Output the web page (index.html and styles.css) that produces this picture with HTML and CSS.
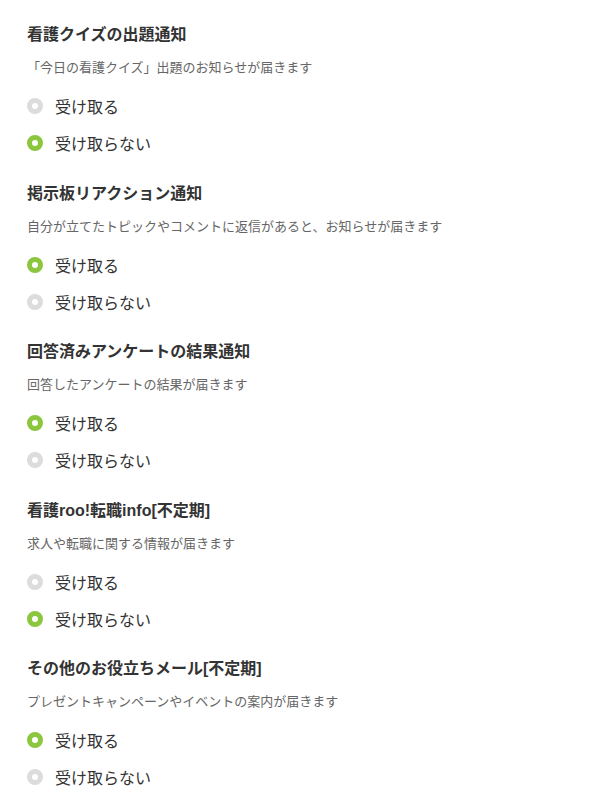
FILE: index.html
```html
<!DOCTYPE html>
<html lang="ja">
<head>
<meta charset="utf-8">
<title>通知設定</title>
<link rel="stylesheet" href="styles.css">
</head>
<body>
<main class="settings">
  <section class="section">
    <h2 class="title">看護クイズの出題通知</h2>
    <p class="desc">「今日の看護クイズ」出題のお知らせが届きます</p>
    <div class="option"><span class="radio"></span><span class="label">受け取る</span></div>
    <div class="option"><span class="radio on"></span><span class="label">受け取らない</span></div>
  </section>
  <section class="section">
    <h2 class="title">掲示板リアクション通知</h2>
    <p class="desc">自分が立てたトピックやコメントに返信があると、お知らせが届きます</p>
    <div class="option"><span class="radio on"></span><span class="label">受け取る</span></div>
    <div class="option"><span class="radio"></span><span class="label">受け取らない</span></div>
  </section>
  <section class="section">
    <h2 class="title">回答済みアンケートの結果通知</h2>
    <p class="desc">回答したアンケートの結果が届きます</p>
    <div class="option"><span class="radio on"></span><span class="label">受け取る</span></div>
    <div class="option"><span class="radio"></span><span class="label">受け取らない</span></div>
  </section>
  <section class="section">
    <h2 class="title">看護roo!転職info[不定期]</h2>
    <p class="desc">求人や転職に関する情報が届きます</p>
    <div class="option"><span class="radio"></span><span class="label">受け取る</span></div>
    <div class="option"><span class="radio on"></span><span class="label">受け取らない</span></div>
  </section>
  <section class="section">
    <h2 class="title">その他のお役立ちメール[不定期]</h2>
    <p class="desc">プレゼントキャンペーンやイベントの案内が届きます</p>
    <div class="option"><span class="radio on"></span><span class="label">受け取る</span></div>
    <div class="option"><span class="radio"></span><span class="label">受け取らない</span></div>
  </section>
</main>
</body>
</html>
```
FILE: styles.css
```css
html, body {
  margin: 0;
  padding: 0;
  background: #fff;
}
body {
  font-family: "Liberation Sans", "Noto Sans CJK JP", sans-serif;
  color: #333;
}
.settings {
  padding: 23px 27px 0;
}
.section + .section {
  margin-top: 20px;
}
.title {
  margin: 0;
  font-size: 16px;
  line-height: 24px;
  font-weight: bold;
  color: #333;
}
.desc {
  margin: 11px 0 9.5px;
  font-size: 13px;
  line-height: 20px;
  color: #666;
}
.option {
  display: flex;
  align-items: center;
  height: 37px;
  gap: 12px;
}
.radio {
  box-sizing: border-box;
  width: 16px;
  height: 16px;
  border-radius: 50%;
  border: 5px solid #dcdcdc;
  background: #fff;
  flex: none;
}
.radio.on {
  border-color: #8cc63f;
}
.label {
  font-size: 16px;
  color: #333;
}
```
